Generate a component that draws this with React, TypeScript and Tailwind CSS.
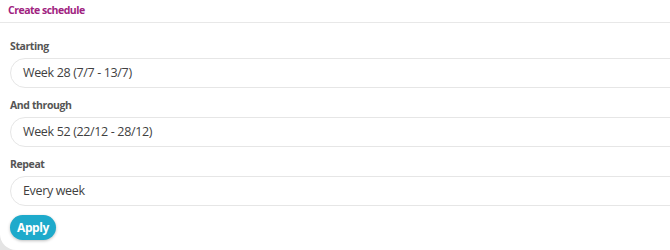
export default function App() {
  const fields = [
    { label: "Starting", value: "Week 28 (7/7 - 13/7)" },
    { label: "And through", value: "Week 52 (22/12 - 28/12)" },
    { label: "Repeat", value: "Every week" },
  ];

  return (
    <div className="h-[250px] w-[670px] overflow-hidden bg-[#e4e4e4] font-['Open_Sans',sans-serif]">
      <div className="h-[250px] rounded-bl-[16px] bg-white">
        <div className="flex h-[23px] items-center border-b border-[#e8e8e8] pl-[8px]">
          <span className="text-[10.5px] font-bold tracking-[-0.5px] text-[#a0237f]">Create schedule</span>
        </div>

        <div className="flex flex-col pl-[10px] pt-[16px]">
          {fields.map((field, i) => (
            <div key={field.label} className={i > 0 ? "mt-[10px]" : ""}>
              <label className="block text-[10.5px] font-bold leading-[14px] tracking-[-0.4px] text-[#555]">
                {field.label}
              </label>
              <div className="mt-[5px] flex h-[30px] w-[700px] items-center rounded-full border border-[#e6e6e6] pl-[12px] text-[12.5px] tracking-[-0.35px] text-[#3f3f3f]">
                {field.value}
              </div>
            </div>
          ))}

          <button
            type="button"
            className="mt-[9px] flex h-[25px] w-[46px] items-center justify-center rounded-full bg-[#1eaacb] text-[12px] font-bold tracking-[-0.4px] text-white shadow-[0_1px_3px_rgba(0,0,0,0.25)]"
          >
            Apply
          </button>
        </div>
      </div>
    </div>
  );
}
